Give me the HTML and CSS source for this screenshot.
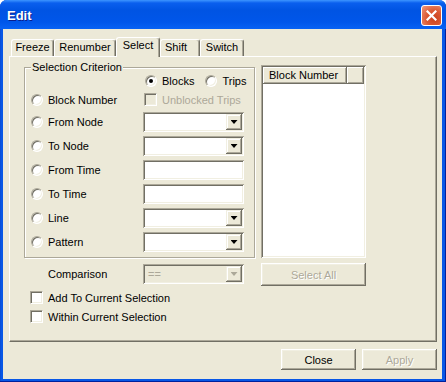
FILE: index.html
```html
<!DOCTYPE html>
<html lang="en">
<head>
  <meta charset="UTF-8" />
  <title>Edit</title>
  <link rel="stylesheet" href="styles.css">
</head>
<body>
  <div class="window">
    <div class="titlebar">
      <span class="title">Edit</span>
      <button class="close-btn" aria-label="Close">
        <svg width="11" height="11" viewBox="0 0 11 11">
          <path d="M1.5 1.5l8 8M9.5 1.5l-8 8" stroke="#fff" stroke-width="2.2" stroke-linecap="square" fill="none"/>
        </svg>
      </button>
    </div>

    <div class="client">
      <div class="tabs">
        <div class="tab tab-freeze">Freeze</div>
        <div class="tab tab-renumber">Renumber</div>
        <div class="tab tab-select tab-active">Select</div>
        <div class="tab tab-shift">Shift</div>
        <div class="tab tab-switch">Switch</div>
      </div>

      <div class="panel">
        <div class="left-col">
          <fieldset class="group">
            <legend>Selection Criterion</legend>
            <div class="criteria">
              <div class="mode">
                <label class="opt"><span class="radio checked"></span>Blocks</label>
                <label class="opt"><span class="radio"></span>Trips</label>
              </div>

              <label class="opt"><span class="radio"></span>Block Number</label>
              <label class="opt opt-check disabled"><span class="check"></span>Unblocked Trips</label>

              <label class="opt"><span class="radio"></span>From Node</label>
              <div class="combo"><span class="combo-btn"><i class="arrow"></i></span></div>

              <label class="opt"><span class="radio"></span>To Node</label>
              <div class="combo"><span class="combo-btn"><i class="arrow"></i></span></div>

              <label class="opt"><span class="radio"></span>From Time</label>
              <div class="field"></div>

              <label class="opt"><span class="radio"></span>To Time</label>
              <div class="field"></div>

              <label class="opt"><span class="radio"></span>Line</label>
              <div class="combo"><span class="combo-btn"><i class="arrow"></i></span></div>

              <label class="opt"><span class="radio"></span>Pattern</label>
              <div class="combo"><span class="combo-btn"><i class="arrow"></i></span></div>
            </div>
          </fieldset>

          <div class="compare-row">
            <span class="compare-label">Comparison</span>
            <div class="combo disabled">
              <span class="combo-text">==</span>
              <span class="combo-btn"><i class="arrow"></i></span>
            </div>
          </div>

          <label class="opt check-row"><span class="check"></span>Add To Current Selection</label>
          <label class="opt check-row"><span class="check"></span>Within Current Selection</label>
        </div>

        <div class="right-col">
          <div class="listview">
            <div class="lv-header">
              <span class="lv-col">Block Number</span>
              <span class="lv-fill"></span>
            </div>
          </div>
          <button class="btn btn-wide" disabled>Select All</button>
        </div>
      </div>

      <div class="footer">
        <button class="btn">Close</button>
        <button class="btn" disabled>Apply</button>
      </div>
    </div>
  </div>
</body>
</html>
```

FILE: styles.css
```css
* {
  box-sizing: border-box;
}

body {
  margin: 0;
  background: #fff;
  font-family: "Liberation Sans", Arial, sans-serif;
  font-size: 11px;
  color: #000;
}

/* window frame */
.window {
  width: 446px;
  height: 382px;
  display: flex;
  flex-direction: column;
  background: #0857e6;
  border-radius: 7px 7px 0 0;
  box-shadow: inset -1px -1px #00209c, inset 1px 0 #0a4fd8;
  overflow: hidden;
}

.titlebar {
  height: 29px;
  flex: none;
  display: flex;
  align-items: center;
  justify-content: space-between;
  padding: 2px 4px 0 7px;
  background: linear-gradient(180deg, #3d95ff 0, #0a5fee 3px, #0054e3 10px, #0056ea 22px, #0862f4 29px);
}

.title {
  color: #fff;
  font-weight: bold;
  font-size: 13px;
  text-shadow: 1px 1px #0a1e8c;
}

.close-btn {
  width: 21px;
  height: 21px;
  padding: 0;
  display: flex;
  align-items: center;
  justify-content: center;
  border: 1px solid #fff;
  border-radius: 3px;
  background: radial-gradient(circle at 65% 65%, #c9401c 0, #dc5a34 45%, #f09a7e 100%);
}

.client {
  flex: 1;
  margin: 0 4px 3px 3px;
  padding: 8px 5px 0 6px;
  background: #ece9d8;
}

/* tabs */
.tabs {
  display: flex;
  align-items: flex-end;
  height: 19px;
  padding-left: 2px;
}

.tab {
  height: 17px;
  line-height: 15px;
  text-align: center;
  background: #ece9d8;
  border: 1px solid #fff;
  border-bottom: none;
  border-right-color: #716f64;
  box-shadow: inset -1px 0 #aca899;
  border-radius: 3px 3px 0 0;
}

.tab-active {
  height: 20px;
  margin-bottom: -1px;
  padding-bottom: 2px;
  position: relative;
  z-index: 1;
}

.tab-freeze { width: 43px; }
.tab-renumber { width: 62px; }
.tab-select { width: 44px; }
.tab-shift { width: 40px; padding-right: 8px; }
.tab-switch { width: 44px; }

/* page panel */
.panel {
  height: 286px;
  display: flex;
  gap: 6px;
  padding: 4px 0 0 14px;
  border: 1px solid;
  border-color: #fff #716f64 #716f64 #fff;
  box-shadow: inset -1px -1px #aca899;
}

.left-col {
  width: 231px;
}

.group {
  margin: 0;
  min-width: 0;
  padding: 0 10px 3px 6px;
  border: 1px solid #aca899;
  box-shadow: inset 1px 1px #fff, 1px 1px #fff;
}

.group legend {
  padding: 0 1px;
  line-height: 12px;
  background: #ece9d8;
}

.criteria {
  display: grid;
  grid-template-columns: 112px 101px;
  grid-template-rows: 16px 21px repeat(6, 24px);
  align-items: center;
}

.mode {
  grid-column: 2;
  display: flex;
  gap: 11px;
  padding-left: 2px;
}

.opt {
  display: flex;
  align-items: center;
  gap: 5px;
  white-space: nowrap;
}

.opt-check {
  padding-left: 1px;
}

.disabled {
  color: #aca899;
}

/* classic radio + checkbox */
.radio {
  width: 12px;
  height: 12px;
  flex: none;
  position: relative;
  border-radius: 50%;
  background: #fff;
  border: 1px solid;
  border-color: #aca899 #fff #fff #aca899;
  box-shadow: inset 1px 1px #716f64, inset -1px -1px #f1efe2;
}

.radio.checked::after {
  content: "";
  position: absolute;
  left: 3px;
  top: 3px;
  width: 4px;
  height: 4px;
  border-radius: 50%;
  background: #000;
}

.check {
  width: 13px;
  height: 13px;
  flex: none;
  background: #fff;
  border: 1px solid;
  border-color: #aca899 #fff #fff #aca899;
  box-shadow: inset 1px 1px #716f64, inset -1px -1px #f1efe2;
}

.disabled .check {
  background: #ece9d8;
}

/* text fields and combos */
.field,
.combo,
.listview {
  background: #fff;
  box-shadow: inset 1px 1px #aca899, inset -1px -1px #fff, inset 2px 2px #716f64, inset -2px -2px #f1efe2;
}

.field,
.combo {
  width: 101px;
  height: 20px;
}

.combo {
  display: flex;
  align-items: center;
  justify-content: space-between;
  padding: 2px;
}

.combo.disabled {
  background: #ece9d8;
}

.combo-text {
  padding-left: 3px;
  color: #aca899;
}

.combo-btn {
  width: 16px;
  height: 16px;
  margin-left: auto;
  display: flex;
  align-items: center;
  justify-content: center;
  background: #ece9d8;
  box-shadow: inset -1px -1px #716f64, inset 1px 1px #f1efe2, inset -2px -2px #aca899, inset 2px 2px #fff;
}

.arrow {
  width: 7px;
  height: 4px;
  background: #000;
  clip-path: polygon(0 0, 100% 0, 50% 100%);
}

.combo.disabled .arrow {
  background: #aca899;
}

.compare-row {
  display: flex;
  align-items: center;
  height: 20px;
  margin-top: 6px;
}

.compare-label {
  width: 119px;
  padding-left: 24px;
}

.check-row {
  height: 19px;
  padding-left: 6px;
}

.compare-row + .check-row {
  margin-top: 4px;
}

/* list + buttons */
.right-col {
  width: 105px;
  padding-top: 4px;
}

.listview {
  height: 193px;
  padding: 2px;
}

.lv-header {
  display: flex;
  height: 17px;
}

.lv-col,
.lv-fill {
  background: #ece9d8;
  box-shadow: inset -1px -1px #716f64, inset 1px 1px #fff, inset -2px -2px #aca899;
}

.lv-col {
  width: 84px;
  padding-left: 6px;
  line-height: 17px;
}

.lv-fill {
  flex: 1;
}

.btn {
  width: 75px;
  height: 21px;
  padding: 0;
  border: none;
  font: inherit;
  color: #000;
  background: #ece9d8;
  box-shadow: inset -1px -1px #716f64, inset 1px 1px #fff, inset -2px -2px #aca899, inset 2px 2px #f1efe2;
}

.btn:disabled {
  color: #aca899;
  text-shadow: 1px 1px #fff;
}

.btn-wide {
  width: 105px;
  height: 23px;
  margin-top: 5px;
}

.footer {
  display: flex;
  justify-content: flex-end;
  gap: 6px;
  margin-top: 7px;
}
```
